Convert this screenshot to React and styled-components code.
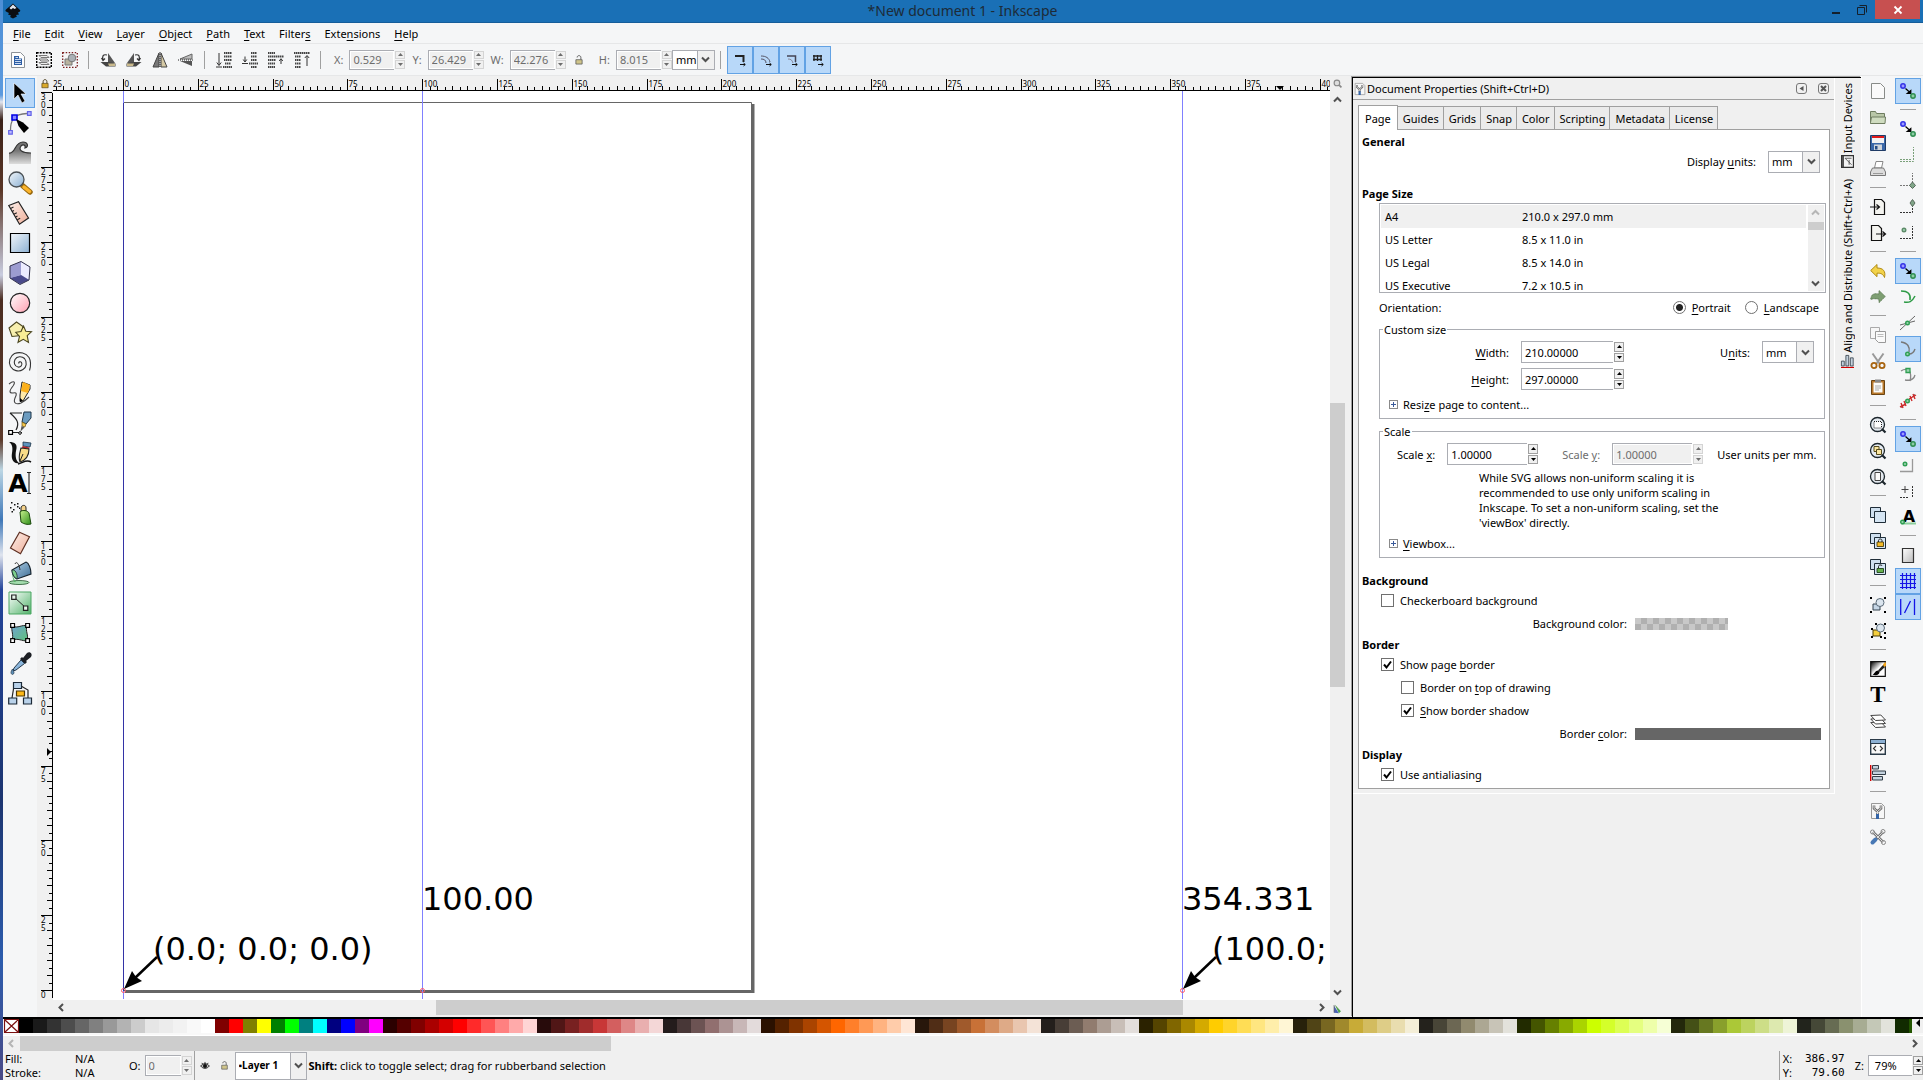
import React from "react";
import styled, { createGlobalStyle, css } from "styled-components";

const GlobalStyle = createGlobalStyle`
  * {
    box-sizing: border-box;
  }

  body {
    margin: 0;
    overflow: hidden;
  }

  body, button, input, select {
    font-family: "Noto Sans", "Open Sans", sans-serif;
    font-size: 11px;
    line-height: 15px;
    color: #000;
  }

  button, input, select, fieldset {
    margin: 0;
    padding: 0;
    border: none;
    background: none;
    border-radius: 0;
  }

  u {
    text-underline-offset: 2px;
  }
`;

/* ---------- data ---------- */

const menus = ["_File", "_Edit", "_View", "_Layer", "_Object", "_Path", "_Text", "Filter_s", "Exte_nsions", "_Help"];

const pageSizes = [
  ["A4", "210.0 x 297.0 mm"],
  ["US Letter", "8.5 x 11.0 in"],
  ["US Legal", "8.5 x 14.0 in"],
  ["US Executive", "7.2 x 10.5 in"],
];

const tabs = ["Page", "Guides", "Grids", "Snap", "Color", "Scripting", "Metadata", "License"];

const palette = `
000000 1a1a1a 333333 4d4d4d 666666 808080 999999 b3b3b3 cccccc e6e6e6 ececec f2f2f2 f9f9f9 ffffff
800000 ff0000 808000 ffff00 008000 00ff00 008080 00ffff 000080 0000ff 800080 ff00ff
2b0000 550000 800000 aa0000 d40000 ff0000 ff2a2a ff5555 ff8080 ffaaaa ffd5d5
280b0b 501616 782121 a02c2c c83737 d35f5f de8787 e9afaf f4d7d7
241c1c 483737 6c5353 916f6f ac9393 c8b7b7 e3dbdb
2b1100 552200 803300 aa4400 d45500 ff6600 ff7f2a ff9955 ffb380 ffccaa ffe6d5
28170b 502d16 784421 a05a2c c87137 d38d5f deaa87 e9c6af f4e3d7
241f1c 483e37 6c5d53 917c6f ac9d93 c8beb7 e3dedb
2b2200 554400 806600 aa8800 d4aa00 ffcc00 ffd42a ffdd55 ffe680 ffeeaa fff6d5
28220b 504416 786721 a0892c c8ab37 d3bc5f decd87 e9ddaf f4eed7
24221c 484537 6c6753 918a6f aca793 c8c4b7 e3e2db
222b00 445500 668000 88aa00 aad400 ccff00 d4ff2a ddff55 e5ff80 eeffaa f6ffd5
23280b 445016 677821 89a02c abc837 bcd35f cdde87 dde9af eef4d7
22241c 454837 676c53 8a916f a7ac93 c4c8b7 e2e3db
112b00 225500 338000 44aa00 55d400 66ff00
`.trim().split(/\s+/);

const commands = [
  "new", "open", "save", "print", "-", "import", "export", "-", "undo", "redo", "-",
  "copy", "cut", "paste", "-", "zoomSel", "zoomDraw", "zoomPage", "-", "duplicate", "clone", "unlink", "-",
  "group", "ungroup", "-", "fill", "textDlg", "layers", "xml", "alignDlg", "-", "docProps", "prefs",
];

const snaps = [
  "snap*", "-", "snap", "bbox1", "bbox2", "bbox3", "bbox4", "-", "snap*", "path1", "path2", "path3*",
  "path4", "path5", "-", "snap*", "obj1", "obj2", "textBase", "-", "pageBox", "grid*", "guide*",
];

const tools = [
  "pointer", "node", "tweak", "zoom", "measure", "rect", "box3d", "circle", "star", "spiral", "pencil",
  "pen", "calligraphy", "text", "spray", "eraser", "bucket", "gradient", "mesh", "dropper", "connector",
];

/* ---------- icons ---------- */

const node = (x, y, c = "#2f9e52") => <circle cx={x} cy={y} r="1.8" fill="#9cd3b0" stroke={c} strokeWidth="1.4" />;

const lens = (inner) => (
  <>
    <circle cx="7.5" cy="7.5" r="7" fill="#e4eaf0" stroke="#1c262c" strokeWidth="1.3" />
    <path d="M12 12l3.5 3.5" stroke="#1c262c" strokeWidth="2.2" />
    {inner}
  </>
);

const squares = (inner) => (
  <>
    <path d="M.5.5h10v10h-10z" fill="#cfe0ef" stroke="#1f2d38" />
    <path d="M4.500 4.500h11v11h-11z" fill="#d5e5f3" stroke="#1f2d38" />
    {inner}
  </>
);

// 24x24 drawings
const toolIcons = {
  pointer: <path d="M6 2v16l4-4 4 8 3-2-4-7h5z" fill="#000" stroke="#fff" strokeWidth=".6" />,
  node: (
    <>
      <path d="M2.5 19C2.5 10 5 3 19 2.5" fill="none" stroke="#777" strokeWidth="1.3" />
      <path d="M4 4h5v5H4z" fill="#88f" stroke="#0000e6" strokeWidth="1.6" />
      <path d="M19.5.7h3.600v3.600h-3.600zM.7 19.5h3.600v3.600H.7z" fill="#b9b9ff" stroke="#6262e8" strokeWidth="1.2" />
      <path d="M8 8l7 3.500 6 5.500-5 5-5.500-7z" fill="#000" />
    </>
  ),
  tweak: (
    <>
      <path d="M1 12c7 1 5-11 14-11 5 0 6 5 2 6 1-3-2-4-4-2-3 4 1 7 10 7v11H1z" fill="url(#gGrey)" />
      <path d="M1 12c7 1 5-11 14-11 5 0 6 5 2 6 1-3-2-4-4-2-3 4 1 7 10 7" fill="none" stroke="#333" strokeWidth="1.2" />
    </>
  ),
  zoom: (
    <>
      <path d="M15 15l7 6" stroke="#9a6a10" strokeWidth="5.5" strokeLinecap="round" />
      <path d="M16 16l5.500 4.500" stroke="#fcb52c" strokeWidth="3.5" strokeLinecap="round" />
      <circle cx="8.5" cy="8.5" r="7.5" fill="url(#gSteel)" stroke="#4a5055" strokeWidth="1.3" />
    </>
  ),
  measure: (
    <>
      <path d="M.8 4.500L10.500.8 20.500 17l-9 6.200z" fill="url(#gSkin)" stroke="#222" strokeWidth="1.2" />
      <path d="M2.500 7.500L5.500 6M4 10.500l2-1M5.800 13.300l3-1.500M7.500 16l2-1M9.200 18.800l3-1.500" stroke="#222" strokeWidth="1.1" />
    </>
  ),
  rect: <path d="M2.500 2.500h19v19h-19z" fill="url(#gSteel)" stroke="#000" strokeWidth="1.2" />,
  box3d: (
    <>
      <path d="M2 5l11-4.500L22 6l-1 13-9 4.500L2 17z" fill="#b6b6dd" />
      <path d="M13 .8V14l8.500 5L22 6z" fill="#ececff" />
      <path d="M13 14l8 5-9 4-10-6z" fill="#4a4a8c" />
      <path d="M2 5L13 .8V14L2 17z" fill="#9c9cd0" />
      <path d="M2 5l11-4.500L22 6l-1 13-9 4.500L2 17z" fill="none" stroke="#33334d" />
    </>
  ),
  circle: <circle cx="12" cy="12" r="9.7" fill="url(#gPink)" stroke="#222" strokeWidth="1.2" />,
  star: (
    <>
      <path d="M8.500 1L15 5.500l-2 9-9 1-3-8.500z" fill="#f7efae" stroke="#4b4620" strokeWidth="1.1" />
      <path d="M15.500 5l2.300 5.200 5.700.5-4.300 4 1.300 6.800-5.200-3.200-5.300 3 1.500-6-3.700-4 5.200-.8z" fill="#f9ee95" stroke="#4b4620" strokeWidth="1.1" />
    </>
  ),
  spiral: (
    <path
      d="M11 12.500c-1-1.500 1.500-2.500 2.500-1 1.500 2.500-1 5-3.500 4.500-3.500-.5-4.500-4.500-3-7.500 2-3.500 7-3.500 9.500-1 3 3.500 2 9-1.500 11-4.500 3-10 1-12.500-3-2.500-5-.5-10.500 4-13C12 .5 18 2 21 6.500c2 3.500 2 8 .5 13"
      fill="none"
      stroke="#333"
      strokeWidth="1.1"
    />
  ),
  pencil: (
    <>
      <path d="M1 3c5-4 7-2 4 2-4 5-4 7 0 7 4-1 4 1 2 5-2 5 1 7 6 5 4-2 6-4 8-6" fill="none" stroke="#444" strokeWidth="1.1" />
      <path d="M14 1l8 3v4l-7 12-3 .5V14z" fill="#ffe9a8" stroke="#222" />
      <path d="M15 1l7 3-2 8-7-2z" fill="#fbb01c" />
      <path d="M12 17v4l3-1.500z" fill="#000" />
    </>
  ),
  pen: (
    <>
      <path d="M2 2h12M2 2c7 6 10 10 6 17M5 21.500h9" fill="none" stroke="#222" strokeWidth="1.2" />
      <path d="M.7 19.500h3.800v3.800H.7z" fill="#fff" stroke="#000" strokeWidth="1.2" />
      <circle cx="12" cy="22" r="1.3" fill="#fff" stroke="#000" />
      <path d="M16 1h7v6l-5 6-4-2z" fill="#6c9cc0" stroke="#1d3548" />
      <path d="M14 11l4 2-1 3-3-1z" fill="#f4c64d" stroke="#6b5312" strokeWidth=".7" />
      <path d="M13.500 15l3 1.500-4 4z" fill="#555" />
    </>
  ),
  calligraphy: (
    <>
      <path d="M1 1c6 0 9 2 7 9-1 5 0 10 3 12-6 1-8-4-7-10C5 6 4 3 1 1z" fill="#111" />
      <path d="M10 23c5-1 8-5 13-2" fill="none" stroke="#111" strokeWidth="1.5" />
      <path d="M15 1l8 1-1 4-7-1z" fill="#5e93bd" stroke="#1d3548" strokeWidth=".8" />
      <path d="M14.500 5l7 1.500-.5 1.500-7-1z" fill="#b3202c" />
      <path d="M13 7l8 1c0 6-3 11-9 13-2-5 0-10 1-14z" fill="#f9dc88" stroke="#222" strokeWidth="1.1" />
      <path d="M12 20l3-7" stroke="#222" />
    </>
  ),
  text: <path d="M19 1.500h4M21 1.500v21M19 22.500h4" stroke="#222" strokeWidth="1.1" fill="none" />,
  spray: (
    <>
      <path d="M3 1h1.500v1.500H3zM6 3h1.500v1.500H6zM2 6h1.500v1.500H2zM5 8h1.500v1.500H5zM9 5h1.500v1.500H9zM9 2h1.500v1.500H9zM3.500 10H5v1.500H3.500zM11 6.500h1V8h-1z" fill="#111" />
      <path d="M13 7c0-3 5-4 5 0v3h-5z" fill="#f5d38c" stroke="#222" />
      <path d="M12 11c3-3 8-1 9 1l2 11c-4 1-7 0-10-2z" fill="url(#gGreen)" stroke="#1c4a0d" />
    </>
  ),
  eraser: <path d="M11.500 1.200l10 4.500-9 17L2.500 17z" fill="url(#gSkin)" stroke="#5d2f22" strokeWidth="1.2" />,
  bucket: (
    <>
      <ellipse cx="11" cy="21.5" rx="10" ry="2" fill="#a3dcae" stroke="#23532d" strokeWidth=".8" />
      <path d="M5 9c-1 6 1 9 3 12H6C5 17 3 13 5 9z" fill="#5bb46c" />
      <path d="M4 9l14-8c3 1 5 7 5 12L9 18c-3-1-5-6-5-9z" fill="url(#gBlue)" stroke="#16222c" strokeWidth="1.1" />
      <path d="M4 9c3-1 6 4 5 9-3-1-5-6-5-9z" fill="#7ccf8c" stroke="#16222c" strokeWidth=".8" />
      <path d="M7 3c1-3 4-1 5 6" fill="none" stroke="#333" />
    </>
  ),
  gradient: (
    <>
      <path d="M1 1h22v22H1z" fill="url(#gGreen2)" stroke="#4ba763" />
      <path d="M6 6l12 11" stroke="#222" />
      <path d="M3.700 4h4.300v4.300H3.700zM15.500 15h4.300v4.300h-4.300z" fill="#e9f5ec" stroke="#222" strokeWidth="1.2" />
    </>
  ),
  mesh: (
    <>
      <path d="M4 5c6 3 10-2 15 0-2 5 2 9 0 15-5 0-9-3-15-1 2-5-1-9 0-14z" fill="url(#gMesh)" stroke="#222" />
      <path d="M2.700 2.500h3.800v3.800H2.700zM17.700 2.500h3.800v3.800h-3.800zM2.700 17.700h3.800v3.800H2.700zM17.700 17.700h3.800v3.800h-3.800z" fill="#fff" stroke="#000" strokeWidth="1.2" />
    </>
  ),
  dropper: (
    <>
      <path d="M15 7l4-5c3-2 6 1 4 4l-5 4 1 1-2 2-5-5 2-2z" fill="#1c1f24" />
      <path d="M13 9l3.500 3.500L8 19l-3 1 1-3z" fill="#8bb6dc" stroke="#24384a" />
      <path d="M4.500 18c-2 3-2 5 0 5.500 2-.5 2-2.500 0-5.500z" fill="#5c8fb8" stroke="#24384a" strokeWidth=".7" />
    </>
  ),
  connector: (
    <>
      <path d="M6 5L4 17M13 5l7 4v8" fill="none" stroke="#222" strokeWidth="1.2" />
      <path d="M5.500 1.500h8v6h-8z" fill="#b9d2ea" stroke="#1c2a38" strokeWidth="1.2" />
      <path d="M8.500 10h8v5h-8z" fill="#fdb817" stroke="#4d3600" strokeWidth="1.2" />
      <path d="M.7 17h8v6h-8zM15.500 17h8v6h-8z" fill="#b9d2ea" stroke="#1c2a38" strokeWidth="1.2" />
    </>
  ),
};

const rows = (x, w) => (
  <path
    d={`M${x[0]} 1h${w[0]}M${x[1]} 4.500h${w[1]}M${x[2]} 8h${w[2]}M${x[3]} 11.500h${w[3]}M${x[4]} 15h${w[4]}`}
    stroke="#444"
    strokeWidth="2.2"
    strokeDasharray="1.5 .5"
  />
);

const affect = (inner) => (
  <g transform="translate(3 3)">
    {inner}
    <path d="M5 9.500h5M8.500 8l1.800 1.500L8.500 11" fill="none" stroke="#111" />
  </g>
);

// 16x16 drawings
const icons = {
  selAll: (
    <>
      <path d="M1.500.5h9l4 4v11h-13z" fill="#fdfdfd" stroke="#8c9196" />
      <path d="M4 4h5v2.500h3V13H4z" fill="#2d5ea5" />
      <path d="M5 7.500h6M5 9.500h6M5 11.500h6M5.500 5.500h2.500" stroke="#dce8f7" strokeWidth=".9" />
    </>
  ),
  selLayers: (
    <>
      <path d="M.7.7h14.600v14.600H.7z" fill="none" stroke="#000" strokeWidth="1.4" strokeDasharray="2 1" />
      <path d="M3 3.500h8l2 2H5zM3 7h8l2 2H5zM3 10.500h8l2 2H5z" fill="#eee" stroke="#777" />
    </>
  ),
  deselect: (
    <>
      <path d="M.7.7h14.600v14.600H.7z" fill="none" stroke="#7a1f1f" strokeWidth="1.3" strokeDasharray="1.5 1.5" />
      <path d="M3 7h7v6H3z" fill="#b9b39f" stroke="#777" />
      <circle cx="10" cy="6" r="3.8" fill="#aab0b5" stroke="#777" />
    </>
  ),
  rotCcw: (
    <>
      <path d="M8 9V1l7 10H8z" fill="#555" />
      <path d="M.5 10h8l7 1.500v3H6z" fill="#444" />
      <path d="M8 11.500h7v2.500H9z" fill="#c9b98c" />
      <path d="M3 8c-1-4 0-6 4-5M1.500 6L3 8.500 5 6.500" fill="none" stroke="#333" strokeWidth="1.2" />
    </>
  ),
  rotCw: (
    <>
      <path d="M8 9V1L1 11h7z" fill="#555" />
      <path d="M15.500 10h-8l-7 1.500v3H10z" fill="#444" />
      <path d="M8 11.500H1V14h6z" fill="#c9b98c" />
      <path d="M13 8c1-4 0-6-4-5M14.500 6L13 8.500 11 6.500" fill="none" stroke="#333" strokeWidth="1.2" />
    </>
  ),
  flipH: (
    <>
      <path d="M7 1v14H1z" fill="#777" stroke="#444" />
      <path d="M9 1v14h6z" fill="#d5c9a4" stroke="#444" />
      <path d="M8 0v16" stroke="#222" strokeDasharray="1 1" />
    </>
  ),
  flipV: (
    <>
      <path d="M14 7H2l12-5z" fill="#bbb" stroke="#666" />
      <path d="M14 9H2l12 5z" fill="#555" />
      <path d="M0 8h15" stroke="#222" strokeDasharray="1 1" />
    </>
  ),
  lower2: <>{rows([8, 8, 8, 9, 7], [8, 8, 8, 6, 9])}<path d="M3 1v12M.8 10.500L3 13.500l2.200-3M0 15h6" fill="none" stroke="#333" /></>,
  lower1: <>{rows([9, 9, 9, 7, 9], [6, 6, 6, 9, 6])}<path d="M3 4.500v5M1.200 7.500L3 10l1.800-2.500M0 11.500h6" fill="none" stroke="#333" /></>,
  raise1: <>{rows([0, 0, 0, 0, 0], [7, 16, 8, 7, 7])}<path d="M13 12V7M11.200 9L13 6.700 14.800 9" fill="none" stroke="#333" /></>,
  raise2: <>{rows([0, 1, 1, 1, 1], [16, 6, 6, 6, 6])}<path d="M13 14V4M10.800 6L13 3.500 15.200 6" fill="none" stroke="#333" /></>,
  affStroke: affect(<path d="M0 1h8.500v6" fill="none" stroke="#222" strokeWidth="2" />),
  affCorner: affect(<path d="M0 1c5 0 8 2 9 6M0 4c3 0 5 1 5 4" fill="none" stroke="#556" />),
  affGrad: affect(<><path d="M0 1h8.500v6" fill="none" stroke="#445" strokeWidth="1.5" /><path d="M1 4c3 0 4 1 5 4" fill="none" stroke="#889" /></>),
  affPat: affect(<path d="M0 1h9M0 4.500h9M1 0v6M4.500 0v6M8 0v6" fill="none" stroke="#222" strokeWidth="1.3" />),
  new: <path d="M1.500.5h9l4 4v11h-13z" fill="#fafafa" stroke="#888b88" />,
  open: <><path d="M.5 14.500v-12h5l1 2h8v4" fill="#b9c7a8" stroke="#6e7c60" /><path d="M.5 13.500l1-5.500h14l-.5 6.500H.5z" fill="#cfdcc0" stroke="#6e7c60" /></>,
  save: (
    <>
      <path d="M.5.5h15v15H.5z" fill="#3a67a8" stroke="#1f3b66" />
      <path d="M2 1h12v7H2z" fill="#f2f2f2" />
      <path d="M2 1h12v2H2z" fill="#e01a1a" />
      <path d="M4 9.500h8V15H4z" fill="#cfd4da" />
      <path d="M5 11h2.500v3.500H5z" fill="#234a85" />
    </>
  ),
  print: (
    <>
      <path d="M4.500 7L6 .5h7L11.500 7z" fill="#fff" stroke="#888" />
      <path d="M2.500 7h11l2 4v3.500H.5V11z" fill="#dcdcdc" stroke="#777" />
      <path d="M3 12.500h10" stroke="#999" />
    </>
  ),
  import: <><path d="M4.500.5h7l3 3v12h-10z" fill="#f4f4f0" stroke="#111" strokeWidth="1.2" /><path d="M0 8h9M6.500 5.500L9.500 8l-3 2.500" fill="none" stroke="#111" strokeWidth="1.2" /></>,
  export: <><path d="M1.500.5h7l3 3v12h-10z" fill="#f4f4f0" stroke="#111" strokeWidth="1.2" /><path d="M6 9h9M12.500 6.500L15.500 9l-3 2.500" fill="none" stroke="#111" strokeWidth="1.2" /></>,
  undo: <path d="M.7 7.500L7 1.500V5c6 0 9 3 7.500 9.500C13 11 11 10 7 10.200v3.500z" fill="#f2d24a" stroke="#b08a12" />,
  redo: <path d="M15.300 7.500L9 1.500V5C3 4 1 6 .8 10.500 3 9.500 5 9.500 9 10.200v3.500z" fill="#7d9e72" stroke="#5d7a55" strokeDasharray="1 .5" />,
  copy: <><path d="M.5.5h9v11h-9z" fill="#f7f7f7" stroke="#aaa" /><path d="M5.500 4.500h10v11h-7l-3-3z" fill="#fafafa" stroke="#999" /><path d="M7.500 7.500h6M7.500 9.500h6" stroke="#bbb" /></>,
  cut: (
    <>
      <path d="M2.500.5l7 10M13.500.5l-7 10" stroke="#999" strokeWidth="2" />
      <circle cx="4" cy="12.5" r="2.6" fill="none" stroke="#a86410" strokeWidth="1.8" />
      <circle cx="12" cy="12.5" r="2.6" fill="none" stroke="#a86410" strokeWidth="1.8" />
    </>
  ),
  paste: (
    <>
      <path d="M1.500 1.500h13v14h-13z" fill="#b8782a" stroke="#6b4412" />
      <path d="M3.500 3.500h9v10h-9z" fill="#fbfbf8" />
      <path d="M5 .5h6v3H5z" fill="#888" />
      <path d="M5 7h6M5 9h6M5 11h4" stroke="#aaa" />
    </>
  ),
  zoomSel: lens(<path d="M4 4.500h7.500v6.500H4z" fill="#fff" stroke="#222" strokeDasharray="1 1" />),
  zoomDraw: lens(<><path d="M4 3.500h5v5H4z" fill="#fbe7a1" stroke="#554a1a" /><path d="M6.500 6.500h5v5h-5z" fill="#fbe7a1" stroke="#554a1a" /></>),
  zoomPage: lens(<path d="M5 3.500h5.500v8H5z" fill="#fafafa" stroke="#444" />),
  duplicate: squares(null),
  clone: squares(<><path d="M7 9h6.500v4.500H7z" fill="#f3bb2a" stroke="#3b2d00" strokeWidth=".8" /><path d="M8.500 9V7.500c0-2 3.500-2 3.500 0V9" fill="none" stroke="#222" /></>),
  unlink: squares(<><path d="M7 9.500h6.500v4H7z" fill="#67b34e" stroke="#12300a" strokeWidth=".8" /><path d="M8.500 9V7.500c0-2 3.500-2 3.500-.5" fill="none" stroke="#222" /></>),
  group: (
    <>
      <path d="M3 7h7v6H3z" fill="#c5d6e6" stroke="#34424e" />
      <circle cx="10" cy="5.5" r="4" fill="#dbe5ee" stroke="#5a6a78" />
      <path d="M0 0h2v2H0zM14 0h2v2h-2zM0 14h2v2H0zM14 14h2v2h-2z" fill="#000" />
    </>
  ),
  ungroup: (
    <>
      <path d="M3 7h7v6H3z" fill="#f5cf3e" stroke="#4d3f07" />
      <circle cx="10.5" cy="5" r="4" fill="#dbe5ee" stroke="#5a6a78" />
      <path d="M1 5h2v2H1zM5 0h2v2H5zM14 0h2v2h-2zM14 9h2v2h-2zM1 13h2v2H1zM10 13h2v2h-2zM14 14h2v2h-2z" fill="#000" />
    </>
  ),
  fill: (
    <>
      <path d="M.7.7h14.600v14.600H.7z" fill="url(#gBw)" stroke="#111" strokeWidth="1.2" />
      <path d="M15.500 3.500l-3 1-4.500 5 1.500 1.500 5-4.500z" fill="#222" />
      <path d="M13 3l3-2v4l-2 1z" fill="#f2a51c" />
      <path d="M8 9.500c-3 0-3 3-5.500 4 3.500 1.500 7 .5 7-2.500z" fill="#000" />
    </>
  ),
  layers: (
    <>
      <path d="M.8 9.500l10-.5 4.700 5-10 .5z" fill="#fff" stroke="#444" />
      <path d="M.8 6l10-.5 4.700 5-10 .5z" fill="#fff" stroke="#444" />
      <path d="M.8 2.500l10-.5 4.700 5-10 .5z" fill="#fff" stroke="#444" />
    </>
  ),
  xml: (
    <>
      <path d="M.7.7h14.600v14.600H.7z" fill="#f8f8f8" stroke="#2a3a48" strokeWidth="1.4" />
      <path d="M1 1h14v3H1z" fill="#8cb0d3" />
      <path d="M1 4.500h14" stroke="#2a3a48" />
      <path d="M6 7L3.500 9.500 6 12M10 7l2.500 2.500L10 12" fill="none" stroke="#333" strokeWidth="1.1" />
    </>
  ),
  alignDlg: <><path d="M.7 0v16" stroke="#d40000" strokeWidth="1.4" /><path d="M2.500.5h6V4h-6zM2.500 6h13v3.500h-13zM2.500 11.500h10V15h-10z" fill="#c4d2de" stroke="#333e48" /></>,
  docProps: (
    <>
      <path d="M1.500.5h10l3 3v12h-13z" fill="#f7f7f7" stroke="#999" />
      <path d="M4 2.500v3L7.500 8.500 11 5.500v-3M7.500 8v4" fill="none" stroke="#666" strokeWidth="2.600" />
      <path d="M4 2.500v3L7.500 8.500 11 5.500v-3M7.500 8v3" fill="none" stroke="#ddd" strokeWidth="1" />
      <path d="M7.500 11v5" stroke="#3565a8" strokeWidth="3" />
    </>
  ),
  prefs: (
    <>
      <path d="M3 3l10 10M13 3L6 10" stroke="#777" strokeWidth="2.800" />
      <path d="M3 3l10 10M13 3L6 10" stroke="#ddd" strokeWidth="1" />
      <path d="M5.500 10.500l-3 3" stroke="#4878b5" strokeWidth="4" strokeLinecap="round" />
      <circle cx="2.5" cy="3" r="2" fill="none" stroke="#888" />
      <circle cx="13" cy="2.5" r="2" fill="none" stroke="#888" />
      <circle cx="13.5" cy="13.5" r="2" fill="none" stroke="#888" />
    </>
  ),
  snap: (
    <>
      <path d="M5.500 5.500l4.500 4M10.800 7.500v3H7.300z" fill="#000" stroke="#000" strokeWidth="1.2" />
      <circle cx="3" cy="3" r="2.2" fill="#9c9cff" stroke="#3232e6" strokeWidth="1.5" />
      <circle cx="13" cy="13" r="2.2" fill="#8ccca4" stroke="#2f8e50" strokeWidth="1.5" />
    </>
  ),
  bbox1: <path d="M0 14.500h13.500V0M0 12.500h11.500" fill="none" stroke="#7aa07a" strokeDasharray="2 1" />,
  bbox2: <><path d="M0 12.500h12.500V0" fill="none" stroke="#777" strokeDasharray="2 1" /><path d="M12.500 9l3 3.500-3 3-3-3z" fill="#80a588" stroke="#586b5c" /></>,
  bbox3: <><path d="M0 13.500h12.500V7" fill="none" stroke="#333" strokeDasharray="2 1" /><path d="M12.500.5l2.500 3.500-2.500 3.500L10 4z" fill="#80a588" stroke="#586b5c" /></>,
  bbox4: <><path d="M0 13.500h12.500V1" fill="none" stroke="#333" strokeDasharray="2 1" />{node(4, 5, "#5d8a68")}</>,
  path1: <path d="M1 2c7 0 10 3 9 9M15 7c-3 6-6 7-11 6" fill="none" stroke="#2c9a45" strokeWidth="1.5" />,
  path2: <><path d="M0 15L15 1M0 10l15-4" stroke="#666" fill="none" />{node(7.5, 8)}</>,
  path3: <><path d="M1 1c7 1 9 5 8 10M15 8c-1 3-3 5-6 5" fill="none" stroke="#777" strokeWidth="1.4" />{node(7.5, 13)}</>,
  path4: <><path d="M1 4c3-2 5-2 7-1M9 3c2 3 2 7 1 11M15 8c-1 4-4 6-10 5" fill="none" stroke="#888" strokeWidth="1.3" /><path d="M6 1.500h4v4H6z" fill="#9cd3b0" stroke="#2f9e52" strokeWidth="1.3" /></>,
  path5: <><path d="M1 15L15 1" stroke="#888" /><path d="M1 10l2 5M4 8l2 5M10 3l2 5M13 1l2 5M0 14l6-3M9 6l7-4" stroke="#cc2b2b" strokeWidth="1.4" />{node(7.5, 8)}</>,
  obj1: <><path d="M0 14.500h12.500V2" fill="none" stroke="#999" strokeWidth="1.3" />{node(5, 7)}</>,
  obj2: <><path d="M0 14.500h9M12.500 14V2" fill="none" stroke="#333" strokeDasharray="2 1" /><path d="M5 3v7M1.500 6.500h7" stroke="#444" /></>,
  textBase: <><path d="M1 14.500h15" stroke="#8bcf9b" strokeWidth="2" />{node(2.5, 13)}</>,
  pageBox: <path d="M2.500 1.500h11v14h-11z" fill="url(#gPage)" stroke="#333" strokeWidth="1.2" />,
  grid: <path d="M0 2.500h16M0 6.500h16M0 10.500h16M0 14.500h16M2.500 0v16M6.500 0v16M10.500 0v16M14.500 0v16" stroke="#1414e6" strokeWidth="1.2" />,
  guide: <path d="M.7 0v16M14.500 0v16M4.500 14l6-12" stroke="#1414e6" strokeWidth="1.3" />,
  lock: <><path d="M3 7h10v7H3z" fill="#d9a92b" stroke="#4d3a08" /><path d="M5 7V4c0-4 6-4 6 0v3" fill="none" stroke="#4d4020" strokeWidth="1.6" /></>,
  unlock: <><path d="M3 7.500h10v7H3z" fill="#cfc48a" stroke="#555" strokeWidth="1.2" /><path d="M5 4c0-4 6-4 6 0v3" fill="none" stroke="#555" strokeWidth="1.5" /></>,
  eye: <><path d="M1 8c4-5 10-5 14 0-4 5-10 5-14 0z" fill="#bbb" stroke="#222" strokeWidth="1.4" /><circle cx="8" cy="8" r="3.2" fill="#111" /><path d="M3 3l1.500 2.500M8 1.500V5M13 3l-1.500 2.500" stroke="#222" strokeWidth="1.4" /></>,
  device: <><path d="M.7.7h14.600v14.600H.7z" fill="#f3f3f3" stroke="#333" strokeWidth="1.4" /><path d="M1 2.500h14" stroke="#333" strokeWidth="2" /><path d="M4 13l8-8v8M4 10h6" fill="none" stroke="#444" /></>,
  wheel: <><path d="M4 2l9 10-3 3z" fill="#4aa34a" /><path d="M3 4v10l7 1z" fill="#4a62b8" /><path d="M4 2l3 5 5 7z" fill="#a84a4a" /><path d="M3 3v11" stroke="#555" /></>,
};

const Svg = styled.svg`
  display: block;
  flex: none;
  width: ${(p) => p.$size}px;
  height: ${(p) => p.$size}px;
  overflow: visible;
`;

const TurnedIcon = styled.span`
  transform: rotate(-90deg);
`;

function Icon({ name, size = 16 }) {
  return (
    <Svg $size={size} viewBox="0 0 16 16" aria-hidden="true">
      {name === "textDlg" && <text x="8" y="15" textAnchor="middle" fontFamily="Liberation Serif, serif" fontWeight="bold" fontSize="23">T</text>}
      {name === "textBase" && <text x="9" y="13" textAnchor="middle" fontFamily="DejaVu Sans, sans-serif" fontWeight="bold" fontSize="16">A</text>}
      {icons[name]}
    </Svg>
  );
}

function ToolIcon({ name }) {
  return (
    <Svg $size={24} viewBox="0 0 24 24" aria-hidden="true">
      {name === "text" && <text x="10" y="21" textAnchor="middle" fontFamily="DejaVu Sans, sans-serif" fontWeight="bold" fontSize="25">A</text>}
      {toolIcons[name]}
    </Svg>
  );
}

const HiddenSvg = styled.svg`
  position: absolute;
  width: 0;
  height: 0;
`;

function Gradients() {
  const stops = (id, a, b) => (
    <linearGradient id={id} x1="0" y1="0" x2="1" y2="1">
      <stop offset="0" stopColor={a} />
      <stop offset="1" stopColor={b} />
    </linearGradient>
  );
  return (
    <HiddenSvg aria-hidden="true">
      <defs>
        {stops("gSteel", "#f2f7fb", "#8db1d3")}
        {stops("gSkin", "#fdf1ec", "#efae98")}
        {stops("gPink", "#fff", "#ff9fb0")}
        {stops("gGreen", "#c7f08d", "#2f8f1a")}
        {stops("gGreen2", "#fff", "#52b36b")}
        {stops("gMesh", "#6fa3d0", "#5ec27a")}
        {stops("gBlue", "#b3d3ea", "#3c6c94")}
        {stops("gPage", "#fff", "#bbb")}
        <linearGradient id="gBw" x1="0" y1="0" x2="1" y2="1">
          <stop offset=".05" stopColor="#111" />
          <stop offset=".5" stopColor="#fff" />
        </linearGradient>
        <linearGradient id="gGrey" x1="0" y1="0" x2="0" y2="1">
          <stop offset=".4" stopColor="#777" />
          <stop offset="1" stopColor="#ddd" />
        </linearGradient>
      </defs>
    </HiddenSvg>
  );
}

/* ---------- small widgets ---------- */

// "_File" underlines the F
function Mnemonic({ text }) {
  const i = text.indexOf("_");
  if (i < 0) return text;
  return (
    <>
      {text.slice(0, i)}
      <u>{text[i + 1]}</u>
      {text.slice(i + 2)}
    </>
  );
}

const SpinBox = styled.span`
  display: flex;
  height: ${(p) => p.$height || 22}px;
`;

const SpinInput = styled.input`
  width: ${(p) => p.$width}px;
  padding: 0 3px;
  border: 1px solid #abadb3;
  border-right: none;
  background: #fff;

  &:disabled {
    color: #6d6d6d;
    background: #f0f0f0;
    box-shadow: inset 0 0 0 1px #fff;
  }
`;

const SpinButtons = styled.span`
  display: flex;
  flex-direction: column;
  gap: 1px;
  padding: 1px 0 1px 1px;

  button {
    display: flex;
    flex: 1;
    width: 10px;
    align-items: center;
    justify-content: center;
    border: 1px solid ${(p) => (p.$off ? "#d4d4d4" : "#a0a0a0")};
    background: #f0f0f0;
  }

  path {
    fill: ${(p) => (p.$off ? "#6d6d6d" : "#000")};
  }
`;

const SpinArrow = styled.svg`
  width: 5px;
  height: 3px;
`;

function Spin({ id, value, width, height, disabled, label }) {
  return (
    <SpinBox $height={height}>
      <SpinInput id={id} $width={width} defaultValue={value} disabled={disabled} aria-label={label} />
      <SpinButtons $off={disabled}>
        <button type="button" aria-label="Increase">
          <SpinArrow viewBox="0 0 5 3"><path d="M0 3L2.500 0 5 3z" /></SpinArrow>
        </button>
        <button type="button" aria-label="Decrease">
          <SpinArrow viewBox="0 0 5 3"><path d="M0 0h5L2.500 3z" /></SpinArrow>
        </button>
      </SpinButtons>
    </SpinBox>
  );
}

const ComboBox = styled.span`
  display: grid;
  width: ${(p) => p.$width}px;
  height: ${(p) => p.$height || 22}px;

  select {
    grid-area: 1 / 1;
    appearance: none;
    padding-left: 3px;
    border: 1px solid #abadb3;
    background: #fff;
    font-weight: ${(p) => (p.$bold ? "bold" : "normal")};
    font-size: ${(p) => (p.$bold ? 10 : 11)}px;
  }
`;

const ComboArrow = styled.span`
  grid-area: 1 / 1;
  justify-self: end;
  display: flex;
  width: ${(p) => (p.$slim ? 17 : 18)}px;
  align-items: center;
  justify-content: center;
  border: 1px solid #abadb3;
  background: #f0f0f0;
  pointer-events: none;
`;

const Chevron = styled.svg`
  width: 9px;
  height: 9px;
  fill: none;
  stroke: ${(p) => (p.$dim ? "#b5b5b5" : "#505050")};
  stroke-width: 2;
`;

const chevrons = {
  down: "M1 2.500l3.500 3.500L8 2.500",
  up: "M1 6.500L4.500 3 8 6.500",
  left: "M6 1L2.500 4.500 6 8",
  right: "M3 1l3.500 3.500L3 8",
};

function Combo({ id, value, width, height, bold, label }) {
  return (
    <ComboBox $width={width} $height={height} $bold={bold}>
      <select id={id} defaultValue={value} aria-label={label}>
        <option>{value}</option>
      </select>
      <ComboArrow $slim={bold}>
        <Chevron viewBox="0 0 9 9"><path d={chevrons.down} /></Chevron>
      </ComboArrow>
    </ComboBox>
  );
}

const ArrowButton = styled.button`
  display: flex;
  flex: none;
  align-items: center;
  justify-content: center;
  width: ${(p) => (p.$wide ? 17 : 15)}px;
  height: 15px;
`;

function ScrollArrow({ dir, dim, wide }) {
  return (
    <ArrowButton type="button" aria-label={`Scroll ${dir}`} $wide={wide}>
      <Chevron viewBox="0 0 9 9" $dim={dim}><path d={chevrons[dir]} /></Chevron>
    </ArrowButton>
  );
}

/* ---------- window frame ---------- */

const Desktop = styled.div`
  display: flex;
  height: 100vh;
  padding-left: 3px;
  background: linear-gradient(
    #4d8fd6 0, #5c9ade 95px, #e0e4ee 102px, #3a2118 120px, #5a3626 190px, #c9cde0 275px, #4a2c20 300px,
    #5c3a2b 440px, #bcd6e4 470px, #3f78b8 520px, #dfe4ee 555px, #23449a 590px, #1c3570 800px, #2c5cad 960px, #4a4a86 1080px
  );
`;

const Window = styled.div`
  display: flex;
  flex: 1;
  min-width: 0;
  flex-direction: column;
  background: #f0f0f0;
`;

const TitleBar = styled.header`
  display: grid;
  grid-template-columns: 1fr auto 1fr;
  align-items: center;
  height: 23px;
  padding: 0 3px 0 2px;
  border-bottom: 1px solid #155d9a;
  background: #1a70b6;

  h1 {
    margin: 0;
    font-size: 14px;
    font-weight: normal;
    line-height: 22px;
    color: #1d2b38;
  }
`;

const WindowButtons = styled.div`
  display: flex;
  justify-self: end;
  align-self: start;

  button {
    display: flex;
    align-items: center;
    justify-content: center;
    width: 26px;
    height: 19px;
  }

  button:last-child {
    width: 45px;
    background: #c75050;
  }
`;

const MenuBar = styled.nav`
  display: flex;
  height: 21px;
  padding-left: 3px;
  border-bottom: 1px solid #e6e7e8;
  background: #f5f6f7;

  button {
    padding: 0 7px;
  }
`;

const ToolBar = styled.div`
  display: flex;
  align-items: center;
  height: 32px;
  padding-left: 2px;
  border-bottom: 1px solid #e6e7e8;
  background: #f5f6f7;
`;

const IconButton = styled.button`
  display: flex;
  flex: none;
  align-items: center;
  justify-content: center;
  width: ${(p) => p.$size || 26}px;
  height: ${(p) => p.$height || p.$size || 26}px;
  border: 1px solid transparent;

  ${(p) =>
    p.$active &&
    css`
      border-color: #62a2e4;
      background: #b8d8f9;
    `}
`;

const VLine = styled.span`
  width: 1px;
  height: 18px;
  margin: 0 6px 0 5px;
  background: #a0a0a0;
`;

const HLine = styled.span`
  flex: none;
  width: 16px;
  height: 1px;
  margin: 5px 0 6px;
  background: #a0a0a0;
`;

const Coord = styled.label`
  display: flex;
  align-items: center;
  gap: 6px;
  padding-left: 7px;
  color: #6d6d6d;
`;

const Main = styled.main`
  display: flex;
  flex: 1;
  min-height: 0;
`;

const ToolBox = styled.div`
  display: flex;
  flex: none;
  flex-direction: column;
  align-items: center;
  width: 34px;
  padding-top: 2px;
  background: #f5f6f7;
`;

/* ---------- canvas ---------- */

const CanvasGrid = styled.div`
  display: grid;
  flex: 1;
  min-width: 0;
  grid-template-columns: 16px 1fr 15px;
  grid-template-rows: 15px 1fr 17px;
`;

const Corner = styled.div`
  display: flex;
  align-items: center;
  justify-content: center;
`;

const Drawing = styled.svg`
  display: block;
  width: 100%;
  height: 100%;
  overflow: hidden;
  background: ${(p) => (p.$paper ? "#fff" : "none")};
`;

const Cell = styled.div`
  min-width: 0;
  min-height: 0;
  overflow: hidden;
`;

const VScroll = styled.div`
  display: flex;
  flex-direction: column;
  justify-content: space-between;
  padding-top: 1px;
`;

const VTrack = styled.div`
  flex: 1;
  display: grid;
  grid-template-rows: 297fr 284fr 299fr;
`;

const HScroll = styled.div`
  display: flex;
  grid-column: 2;
  padding-bottom: 2px;
`;

const HTrack = styled.div`
  flex: 1;
  display: grid;
  grid-template-columns: ${(p) => p.$split};
`;

const Thumb = styled.div`
  grid-column: ${(p) => (p.$row ? "auto" : 2)};
  grid-row: ${(p) => (p.$row ? 2 : "auto")};
  background: #cdcdcd;
`;

const SCALE = 2.992;

function HRuler() {
  const ticks = [];
  for (let i = -9; i <= 163; i++) {
    const x = Math.round(70 + i * 2.5 * SCALE) + 0.5;
    const h = i % 10 === 0 ? 11 : i % 2 === 0 ? 4 : 3;
    ticks.push(<path key={i} d={`M${x} 14V${14 - h}`} stroke="#000" />);
    if (i % 10 === 0) {
      ticks.push(<text key={`t${i}`} x={x + 1} y="11" fontSize="8">{i * 2.5}</text>);
    }
  }
  return (
    <Drawing>
      <text x="0" y="11" fontSize="8">25</text>
      {ticks}
      <path d="M0 14.500h1400" stroke="#000" />
      <path d="M1223 10h8l-4 4z" />
    </Drawing>
  );
}

function VRuler() {
  const ticks = [];
  for (let i = 0; i <= 120; i++) {
    const y = Math.round(900 - i * 2.5 * SCALE) - 0.5;
    const w = i % 10 === 0 ? 11 : i % 2 === 0 ? 5 : 3;
    ticks.push(<path key={i} d={`M15 ${y}h-${w}`} stroke="#000" />);
    if (i % 10 === 0) {
      String(i * 2.5).split("").forEach((d, k) => {
        ticks.push(<text key={`${i}-${k}`} x="4" y={y + 7 + k * 8} fontSize="8">{d}</text>);
      });
    }
  }
  return (
    <Drawing>
      {ticks}
      <path d="M15.500 2v905" stroke="#000" />
      <path d="M10 657v8l4-4z" />
    </Drawing>
  );
}

function Callout({ x }) {
  return (
    <g transform={`translate(${x} 898)`}>
      <path d="M33-32L11-11" stroke="#000" strokeWidth="2.5" />
      <path d="M0 0L8-18l4 6 6 4z" />
    </g>
  );
}

const canvasFont = { fontFamily: "DejaVu Sans, sans-serif", fontSize: 32 };

function Canvas() {
  return (
    <CanvasGrid>
      <Corner><Icon name="lock" size={10} /></Corner>
      <Cell><HRuler /></Cell>
      <Corner>
        <Svg $size={9} viewBox="0 0 16 16">
          <circle cx="7" cy="7" r="5" fill="#ddd" stroke="#888" strokeWidth="2" />
          <path d="M11 11l4 4" stroke="#888" strokeWidth="3" />
        </Svg>
      </Corner>
      <Cell><VRuler /></Cell>
      <Cell>
        <Drawing $paper>
          <path d="M698 13h3.500v889H72v-3h626z" fill="#666" />
          <path d="M70.500 11.500h628v888h-628z" fill="#fff" stroke="#666" />
          <path d="M70.500 0v908M369.500 0v908M1129.500 0v908" stroke="#8080ff" />
          <path d="M70.500 12v888" stroke="#3333a6" />
          <g fill="none" stroke="#ff5a6a">
            <circle cx="70.5" cy="899.5" r="2" />
            <circle cx="369.5" cy="899.5" r="2" />
            <circle cx="1129.5" cy="899.5" r="2" />
          </g>
          <Callout x={71} />
          <Callout x={1130} />
          <text x="369" y="819" {...canvasFont}>100.00</text>
          <text x="100" y="869" {...canvasFont}>(0.0; 0.0; 0.0)</text>
          <text x="1129" y="819" {...canvasFont}>354.331</text>
          <text x="1159" y="869" {...canvasFont}>(100.0;</text>
        </Drawing>
      </Cell>
      <VScroll>
        <ScrollArrow dir="up" />
        <VTrack><Thumb $row /></VTrack>
        <ScrollArrow dir="down" />
      </VScroll>
      <Corner />
      <HScroll>
        <ScrollArrow dir="left" wide />
        <HTrack $split="366fr 747fr 130fr"><Thumb /></HTrack>
        <ScrollArrow dir="right" wide />
      </HScroll>
      <Corner><Icon name="wheel" size={11} /></Corner>
    </CanvasGrid>
  );
}

/* ---------- document properties ---------- */

const Dock = styled.aside`
  display: flex;
  flex: none;
  align-items: flex-start;
  width: 509px;
  margin: 1px 0 0 7px;
  border-left: 1px solid #000;
  border-top: 1px solid #000;
  box-shadow: -1px -1px 0 #a0a0a0;
`;

const Panel = styled.section`
  flex: 1;
  min-width: 0;
  border-right: 1px solid #fff;
  border-bottom: 1px solid #fff;
`;

const PanelHeader = styled.div`
  display: flex;
  align-items: center;
  gap: 1px;
  height: 22px;
  padding: 0 5px 0 1px;
  border-bottom: 1px solid #a0a0a0;

  h2 {
    flex: 1;
    margin: 0;
    font-size: 11px;
    font-weight: normal;
  }
`;

const HeaderButton = styled.button`
  display: flex;
  align-items: center;
  justify-content: center;
  width: 11px;
  height: 11px;
  margin-left: 10px;
  border: 1px solid #777;
  border-radius: 3px;
`;

const TabList = styled.div`
  display: flex;
  align-items: flex-end;
  height: 29px;
  padding-left: 5px;
`;

const Tab = styled.button`
  height: 23px;
  margin-left: -1px;
  padding: 1px 4px 0 5px;
  border: 1px solid #a0a0a0;
  border-bottom: none;
  background: #ebebeb;

  ${(p) =>
    p.$active &&
    css`
      height: 25px;
      margin: 0 0 -1px;
      padding: 0 6px;
      background: #fff;
    `}
`;

const TabPanel = styled.div`
  margin: 0 4px 4px 5px;
  padding: 4px 2px 2px 3px;
  border: 1px solid #a0a0a0;
  background: #fff;
`;

const Heading = styled.h3`
  margin: ${(p) => p.$top || 0}px 0 0;
  font-size: 11px;
  font-weight: bold;
  line-height: 16px;
`;

const Row = styled.div`
  display: flex;
  align-items: center;
  justify-content: ${(p) => (p.$end ? "flex-end" : "flex-start")};
  gap: ${(p) => p.$gap || 12}px;
  height: 23px;
  padding: 0 ${(p) => p.$right || 0}px 0 ${(p) => p.$left || 0}px;
`;

const ListBox = styled.div`
  display: flex;
  height: 90px;
  margin: 1px 1px 3px 17px;
  padding: 1px;
  overflow: hidden;
  border: 1px solid #abadb3;
`;

const SizeTable = styled.table`
  flex: 1;
  align-self: flex-start;
  border-collapse: collapse;

  td {
    height: 23px;
    padding: 0 0 0 4px;
  }

  td:first-child {
    width: 137px;
  }

  tr:first-child {
    background: #f0f0f0;
  }
`;

const ListScroll = styled.div`
  display: flex;
  flex-direction: column;
  width: 16px;
  margin-left: 2px;
  background: #f0f0f0;
`;

const ListTrack = styled.div`
  flex: 1;
  display: grid;
  grid-template-rows: 2px 8px 1fr;
`;

const RadioLabel = styled.label`
  display: flex;
  align-items: center;
  gap: 6px;

  input {
    width: 13px;
    height: 13px;
    appearance: none;
    border: 1px solid #707070;
    border-radius: 50%;
    background: #fff;
  }

  input:checked {
    background: radial-gradient(#222 0 3px, #fff 4px);
  }
`;

const Fieldset = styled.fieldset`
  min-width: 0;
  margin: ${(p) => p.$top || 0}px 2px ${(p) => p.$bottom || 0}px 17px;
  padding: 0 9px 6px;
  border: 1px solid #abadb3;

  legend {
    margin-left: -6px;
    padding: 0 1px;
  }
`;

const SizeGrid = styled.div`
  display: grid;
  grid-template-columns: 120px auto 1fr auto;
  align-items: center;
  gap: 5px 12px;
  padding: 4px 1px 7px 0;

  label {
    text-align: right;
  }
`;

const ScaleRow = styled.div`
  display: flex;
  align-items: center;
  padding: 4px 0 5px 8px;
  margin-right: -8px;
  white-space: nowrap;
`;

const ScaleField = styled.label`
  display: flex;
  align-items: center;
  gap: 12px;
  margin-right: ${(p) => (p.$off ? 14 : 24)}px;
  color: ${(p) => (p.$off ? "#6d6d6d" : "#000")};
`;

const Help = styled.p`
  width: 265px;
  margin: 0 0 6px 90px;
`;

const Expander = styled.button`
  display: flex;
  align-items: center;
  gap: 5px;
  height: 15px;
`;

const Plus = styled.span`
  display: flex;
  align-items: center;
  justify-content: center;
  width: 9px;
  height: 9px;
  border: 1px solid #8a8a8a;
`;

const Check = styled.label`
  display: flex;
  align-items: center;
  gap: 6px;
  height: 23px;
  margin-left: ${(p) => (p.$nested ? 39 : 19)}px;

  span {
    display: grid;
  }

  input {
    grid-area: 1 / 1;
    width: 13px;
    height: 13px;
    appearance: none;
    border: 1px solid #707070;
    background: #fff;
  }

  svg {
    grid-area: 1 / 1;
    width: 13px;
    height: 13px;
    pointer-events: none;
  }
`;

const ColorRow = styled.div`
  display: grid;
  grid-template-columns: 265px 186px;
  align-items: center;
  gap: 8px;
  height: 23px;
  text-align: right;
`;

const ColorButton = styled.button`
  width: ${(p) => (p.$checker ? "50%" : "100%")};
  height: 12px;
  background: ${(p) => (p.$checker ? "repeating-conic-gradient(#b0b0b0 0 25%, #c8c8c8 0 50%) 0 0 / 12px 12px" : "#666")};
`;

const Grow = styled.span`
  flex: 1;
`;

function CheckRow({ text, checked, nested }) {
  return (
    <Check $nested={nested}>
      <span>
        <input type="checkbox" defaultChecked={checked} />
        {checked && (
          <svg viewBox="0 0 13 13">
            <path d="M3 6.500l2.500 3L10 3.500" fill="none" stroke="#000" strokeWidth="2" />
          </svg>
        )}
      </span>
      <div><Mnemonic text={text} /></div>
    </Check>
  );
}

function ExpandRow({ text }) {
  return (
    <Expander type="button">
      <Plus>
        <Svg $size={7} viewBox="0 0 7 7"><path d="M1 3.500h5M3.500 1v5" stroke="#3a5a9a" /></Svg>
      </Plus>
      <span><Mnemonic text={text} /></span>
    </Expander>
  );
}

function DocumentProperties() {
  return (
    <Panel>
      <PanelHeader>
        <Icon name="docProps" size={12} />
        <h2>Document Properties (Shift+Ctrl+D)</h2>
        <HeaderButton aria-label="Iconify">
          <Svg $size={7} viewBox="0 0 7 7"><path d="M5.500 1v5L1.500 3.500z" fill="#555" /></Svg>
        </HeaderButton>
        <HeaderButton aria-label="Close">
          <Svg $size={7} viewBox="0 0 7 7"><path d="M1 1l5 5M6 1L1 6" stroke="#555" strokeWidth="2" /></Svg>
        </HeaderButton>
      </PanelHeader>
      <TabList role="tablist">
        {tabs.map((t, i) => (
          <Tab key={t} role="tab" aria-selected={i === 0} $active={i === 0}>{t}</Tab>
        ))}
      </TabList>
      <TabPanel>
        <Heading>General</Heading>
        <Row $end $right={7}>
          <label htmlFor="display-units">Display <u>u</u>nits:</label>
          <Combo id="display-units" value="mm" width={52} />
        </Row>
        <Heading $top={13}>Page Size</Heading>
        <ListBox>
          <SizeTable>
            <tbody>
              {pageSizes.map(([name, size]) => (
                <tr key={name}>
                  <td>{name}</td>
                  <td>{size}</td>
                </tr>
              ))}
            </tbody>
          </SizeTable>
          <ListScroll>
            <ScrollArrow dir="up" dim />
            <ListTrack><Thumb $row /></ListTrack>
            <ScrollArrow dir="down" />
          </ListScroll>
        </ListBox>
        <Row $left={17} $right={8} $gap={14}>
          <Grow>Orientation:</Grow>
          <RadioLabel><input type="radio" name="orientation" defaultChecked /><span><u>P</u>ortrait</span></RadioLabel>
          <RadioLabel><input type="radio" name="orientation" /><span><u>L</u>andscape</span></RadioLabel>
        </Row>
        <Fieldset $top={3} $bottom={5}>
          <legend>Custom size</legend>
          <SizeGrid>
            <label htmlFor="page-width"><u>W</u>idth:</label>
            <Spin id="page-width" value="210.00000" width={92} />
            <label htmlFor="page-units">U<u>n</u>its:</label>
            <Combo id="page-units" value="mm" width={52} />
            <label htmlFor="page-height"><u>H</u>eight:</label>
            <Spin id="page-height" value="297.00000" width={92} />
          </SizeGrid>
          <ExpandRow text="Resi_ze page to content..." />
        </Fieldset>
        <Fieldset $bottom={15}>
          <legend>Scale</legend>
          <ScaleRow>
            <ScaleField><span>Scale <u>x</u>:</span><Spin value="1.00000" width={80} /></ScaleField>
            <ScaleField $off><span>Scale <u>y</u>:</span><Spin value="1.00000" width={80} disabled /></ScaleField>
            <span>User units per mm.</span>
          </ScaleRow>
          <Help>
            While SVG allows non-uniform scaling it is recommended to use only uniform scaling in Inkscape. To set a
            non-uniform scaling, set the 'viewBox' directly.
          </Help>
          <ExpandRow text="_Viewbox..." />
        </Fieldset>
        <Heading>Background</Heading>
        <CheckRow text="Checkerboard background" />
        <ColorRow>
          <span>Background color:</span>
          <ColorButton $checker aria-label="Background color" />
        </ColorRow>
        <Heading $top={2}>Border</Heading>
        <CheckRow text="Show page _border" checked />
        <CheckRow text="Border on _top of drawing" nested />
        <CheckRow text="_Show border shadow" checked nested />
        <ColorRow>
          <span>Border <u>c</u>olor:</span>
          <ColorButton aria-label="Border color" />
        </ColorRow>
        <Heading $top={2}>Display</Heading>
        <CheckRow text="Use antialiasing" checked />
      </TabPanel>
    </Panel>
  );
}

const SideTabs = styled.div`
  display: flex;
  flex: none;
  flex-direction: column;
  align-items: center;
  gap: 11px;
  width: 25px;
  margin-right: 1px;
  padding-top: 5px;
`;

const SideTab = styled.button`
  display: flex;
  flex-direction: column;
  align-items: center;
  gap: 2px;
`;

const SideLabel = styled.span`
  writing-mode: vertical-rl;
  transform: rotate(180deg);
`;

const IconColumn = styled.div`
  display: flex;
  flex: none;
  flex-direction: column;
  align-items: center;
  width: ${(p) => p.$width}px;
  padding-top: 2px;
  border-left: ${(p) => (p.$edge ? "1px solid #fff" : "none")};
  background: #f5f6f7;
`;

function IconBar({ items, width, edge }) {
  return (
    <IconColumn $width={width} $edge={edge}>
      {items.map((item, i) => {
        if (item === "-") return <HLine key={i} />;
        const name = item.replace("*", "");
        return (
          <IconButton key={i} aria-label={name} $active={item.endsWith("*")}>
            <Icon name={name} />
          </IconButton>
        );
      })}
    </IconColumn>
  );
}

/* ---------- bottom ---------- */

const PaletteBar = styled.div`
  display: flex;
  height: 18px;
  padding: 0 0 0 1px;
  border-top: 2px solid #000;
  border-bottom: 2px solid #f8f8f8;
`;

const Swatches = styled.div`
  display: flex;
  flex: 1;
  min-width: 0;
  overflow: hidden;
`;

const Swatch = styled.button`
  flex: none;
  width: 14px;
  height: 14px;
  background: ${(p) => p.$color};
`;

const NoColor = styled.button`
  flex: none;
  width: 15px;
  height: 14px;
  background: #fff;
`;

const PaletteMenu = styled.button`
  display: flex;
  width: 11px;
  justify-content: center;
`;

const PaletteScroll = styled.div`
  display: flex;
  height: 16px;
  border-top: 1px solid #fff;
`;

const StatusBar = styled.footer`
  display: flex;
  align-items: center;
  height: 29px;
  padding-left: 2px;
`;

const StyleGrid = styled.div`
  display: grid;
  grid-template-columns: 70px 54px;
  line-height: 14px;
`;

const StatusLabel = styled.label`
  display: flex;
  align-items: center;
  gap: 4px;
`;

const TallLine = styled.span`
  align-self: stretch;
  width: 1px;
  margin-left: 2px;
  background: #a0a0a0;
`;

const Message = styled.p`
  flex: 1;
  margin: 0 0 0 2px;
`;

const Position = styled.div`
  display: grid;
  grid-template-columns: 16px 46px;
  padding: 0 10px 0 3px;
  line-height: 14px;

  span:nth-child(even) {
    font-family: "DejaVu Sans Mono", monospace;
    text-align: right;
  }
`;

export default function App() {
  return (
    <Desktop>
      <GlobalStyle />
      <Gradients />
      <Window>
        <TitleBar>
          <Svg $size={16} viewBox="0 0 16 16">
            <path d="M8 .5l7 6.500c1 1-.5 2-2 2.500l1 2-3 .5 1 1.500-4 2-3-1.500 1-1.500-3-1 1-1.500L1 8.500c-1-.5-.5-1.500 0-2z" fill="#0b0d12" />
            <path d="M8 1.500l3.500 3.500-2 1-1.500-1-2 1.500L4.500 5z" fill="#dfe6ef" />
          </Svg>
          <h1>*New document 1 - Inkscape</h1>
          <WindowButtons>
            <button aria-label="Minimize"><Svg $size={10} viewBox="0 0 10 10"><path d="M1 8h8" stroke="#14202c" strokeWidth="2" /></Svg></button>
            <button aria-label="Restore"><Svg $size={10} viewBox="0 0 10 10"><path d="M.5 2.500h7v7h-7zM2.500.5h7v7" fill="none" stroke="#14202c" /></Svg></button>
            <button aria-label="Close"><Svg $size={8} viewBox="0 0 8 8"><path d="M.5.5l7 7M7.500.5l-7 7" stroke="#fff" strokeWidth="1.8" /></Svg></button>
          </WindowButtons>
        </TitleBar>
        <MenuBar>
          {menus.map((m) => (
            <button key={m} type="button"><Mnemonic text={m} /></button>
          ))}
        </MenuBar>
        <ToolBar>
          {["selAll", "selLayers", "deselect"].map((n) => <IconButton key={n} aria-label={n}><Icon name={n} /></IconButton>)}
          <VLine />
          {["rotCcw", "rotCw", "flipH", "flipV"].map((n) => <IconButton key={n} aria-label={n}><Icon name={n} /></IconButton>)}
          <VLine />
          {["lower2", "lower1", "raise1", "raise2"].map((n) => <IconButton key={n} aria-label={n}><Icon name={n} /></IconButton>)}
          <VLine />
          <Coord>X:<Spin value="0.529" width={45} height={20} disabled /></Coord>
          <Coord>Y:<Spin value="26.429" width={45} height={20} disabled /></Coord>
          <Coord>W:<Spin value="42.276" width={45} height={20} disabled /></Coord>
          <IconButton aria-label="Lock ratio"><Icon name="unlock" size={10} /></IconButton>
          <Coord>H:<Spin value="8.015" width={45} height={20} disabled /></Coord>
          <Combo value="mm" width={43} height={20} label="Units" />
          <VLine />
          {["affStroke", "affCorner", "affGrad", "affPat"].map((n) => (
            <IconButton key={n} $height={28} $active aria-label={n}><Icon name={n} /></IconButton>
          ))}
        </ToolBar>
        <Main>
          <ToolBox>
            {tools.map((t, i) => (
              <IconButton key={t} $size={30} $active={i === 0} aria-label={t}><ToolIcon name={t} /></IconButton>
            ))}
          </ToolBox>
          <Canvas />
          <Dock>
            <DocumentProperties />
            <SideTabs>
              <SideTab>
                <SideLabel>Input Devices</SideLabel>
                <TurnedIcon><Icon name="device" size={13} /></TurnedIcon>
              </SideTab>
              <SideTab>
                <SideLabel>Align and Distribute (Shift+Ctrl+A)</SideLabel>
                <TurnedIcon><Icon name="alignDlg" size={13} /></TurnedIcon>
              </SideTab>
            </SideTabs>
          </Dock>
          <IconBar items={commands} width={32} edge />
          <IconBar items={snaps} width={30} />
        </Main>
        <PaletteBar>
          <NoColor aria-label="None">
            <svg width="15" height="14" viewBox="0 0 15 14"><path d="M.5.5h14v13H.5zM1 1l13 12M14 1L1 13" fill="none" stroke="#7a1010" strokeWidth="1.2" /></svg>
          </NoColor>
          <Swatches>
            {palette.map((c, i) => <Swatch key={i} $color={`#${c}`} aria-label={`#${c}`} />)}
          </Swatches>
          <PaletteMenu aria-label="Palettes">
            <Svg $size={8} viewBox="0 0 8 8"><path d="M6 0v8L2 4z" /></Svg>
          </PaletteMenu>
        </PaletteBar>
        <PaletteScroll>
          <ScrollArrow dir="left" dim wide />
          <HTrack $split="0 591fr 1295fr"><Thumb /></HTrack>
          <ScrollArrow dir="right" wide />
        </PaletteScroll>
        <StatusBar>
          <StyleGrid>
            <span>Fill:</span><span>N/A</span>
            <span>Stroke:</span><span>N/A</span>
          </StyleGrid>
          <StatusLabel>O:<Spin value="0" width={36} height={21} disabled /></StatusLabel>
          <TallLine />
          <IconButton $size={20} aria-label="Toggle layer visibility"><Icon name="eye" size={10} /></IconButton>
          <IconButton $size={20} aria-label="Lock layer"><Icon name="unlock" size={9} /></IconButton>
          <Combo value="▪Layer 1" width={72} height={28} bold label="Layer" />
          <Message><b>Shift:</b> click to toggle select; drag for rubberband selection</Message>
          <TallLine />
          <Position>
            <span>X:</span><span>386.97</span>
            <span>Y:</span><span>79.60</span>
          </Position>
          <StatusLabel>Z:<Spin value=" 79%" width={44} height={21} /></StatusLabel>
        </StatusBar>
      </Window>
    </Desktop>
  );
}
